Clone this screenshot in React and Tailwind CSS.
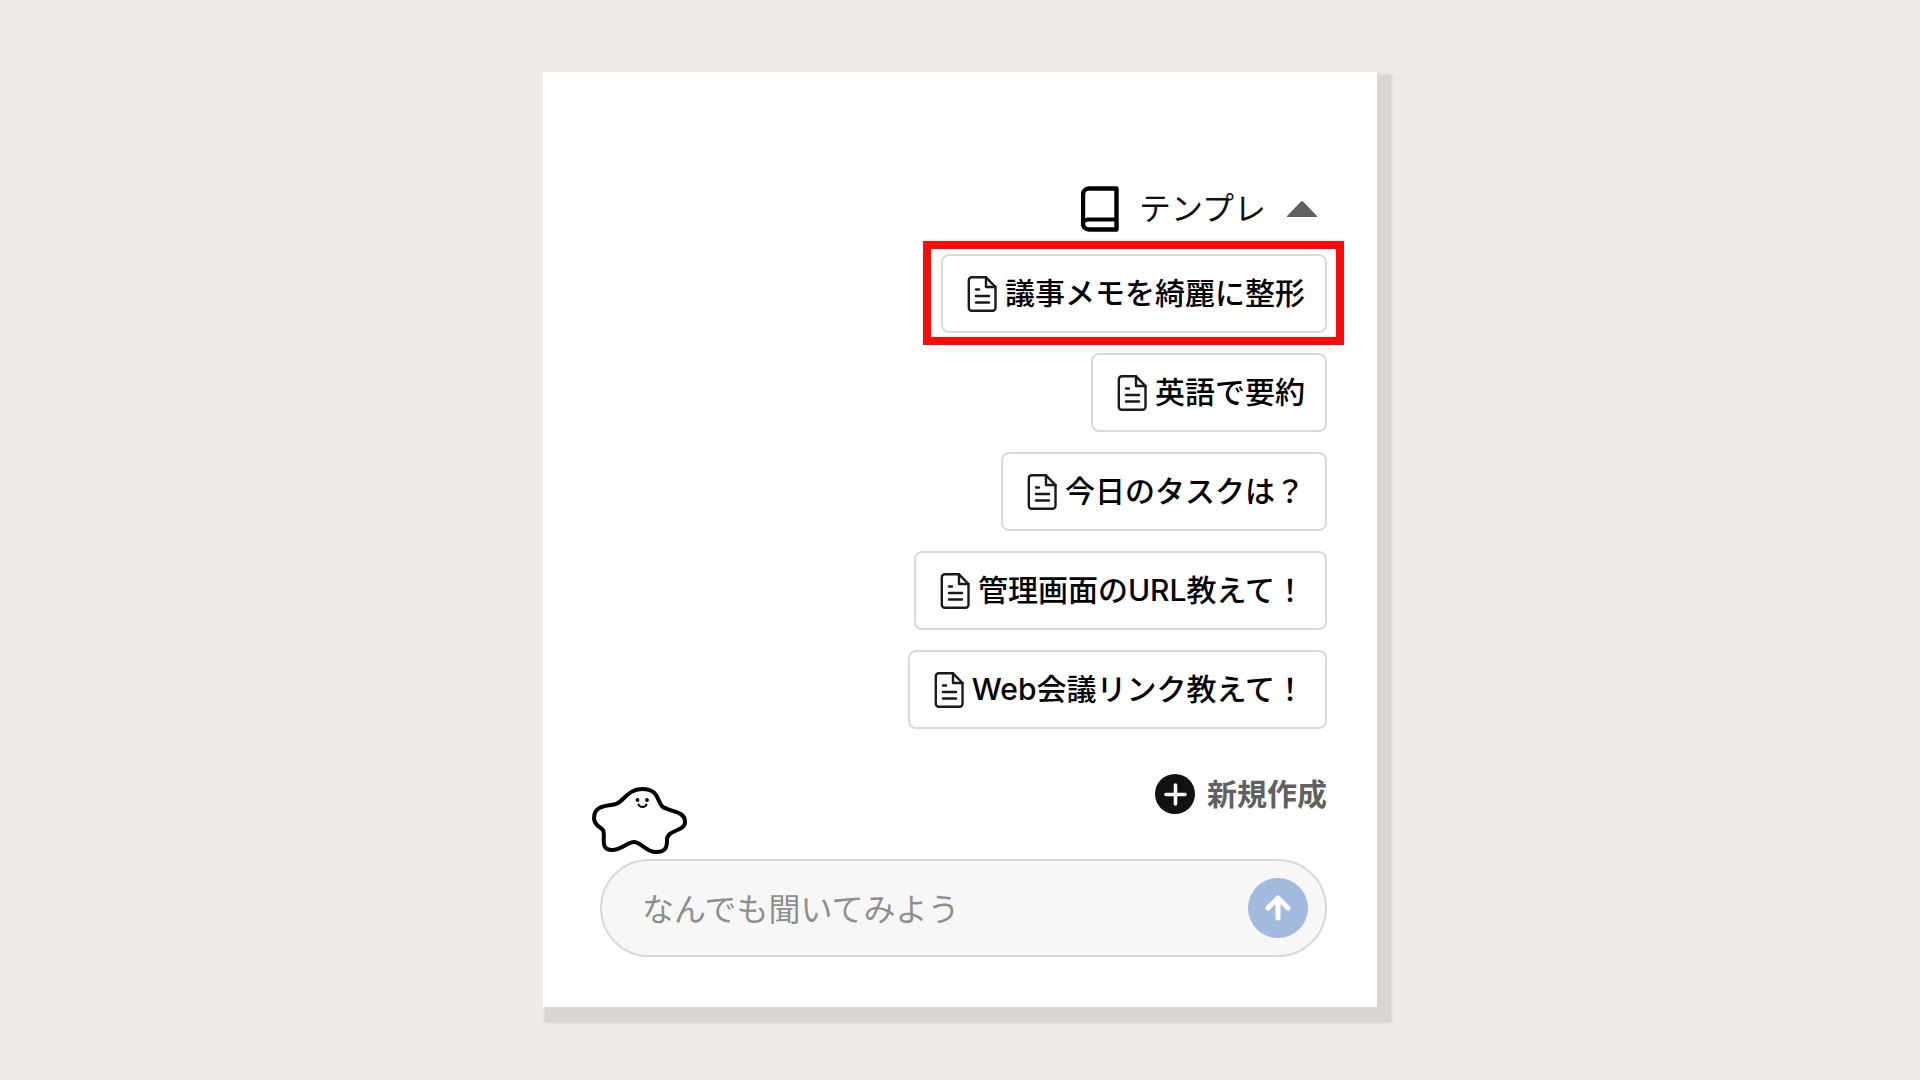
import React, { useState } from 'react';

const templates = [
    { id: 1, label: '議事メモを綺麗に整形', highlighted: true },
    { id: 2, label: '英語で要約' },
    { id: 3, label: '今日のタスクは？' },
    { id: 4, label: '管理画面のURL教えて！' },
    { id: 5, label: 'Web会議リンク教えて！' },
];

const BookIcon = () => (
    <svg width="38" height="46" viewBox="0 0 38 46" fill="none" stroke="#000" strokeWidth="4.4" strokeLinejoin="round" aria-hidden="true">
        <path d="M35.500 2.500H8a6 6 0 0 0-6 6v29a6 6 0 0 0 6 6h27.500V2.500Z" />
        <path d="M2 38a5 5 0 0 1 5-4.500h28.500" strokeWidth="3.8" />
    </svg>
);

const DocumentIcon = () => (
    <svg width="30" height="36" viewBox="0 0 30 36" fill="none" stroke="#1a1a1a" strokeWidth="2.4" strokeLinecap="round" strokeLinejoin="round" aria-hidden="true">
        <path d="M19 1.300H4.800a3 3 0 0 0-3 3v27.400a3 3 0 0 0 3 3h20.700a3 3 0 0 0 3-3V11L19 1.300Z" />
        <path d="M19 1.300V11h9.500" />
        <path d="M9 13.500h3M9 20h13M9 26.500h13" />
    </svg>
);

const Mascot = () => (
    <svg width="96" height="70" viewBox="0 0 96 70" fill="#fff" stroke="#000" strokeWidth="4" strokeLinejoin="round" aria-hidden="true">
        <path d="M24 18C32 15 36 3 50 3C68 3 65 17 71 21C79 26 93 25 93 36C93 46 75 43 75 54C75 61 74 66 64 66C54 66 49 56 42 56C35 56 30 64 20 64C7 64 14 50 11 44C9 41 2 40 2 32C2 19 15 20 24 18Z" />
        <circle cx="45.500" cy="14" r="1.900" fill="#000" stroke="none" />
        <circle cx="55" cy="14" r="1.900" fill="#000" stroke="none" />
        <path d="M46.500 18.500c1 3.200 7 3.200 8 0" fill="none" strokeWidth="2" strokeLinecap="round" />
    </svg>
);

const TemplateButton = ({ label, highlighted }) => (
    <div className="relative">
        <button
            type="button"
            className="flex h-[79px] items-center gap-2 rounded-lg border-2 border-[#d9d9d9] bg-white pl-6 pr-5 text-[30px] font-medium text-black"
        >
            <DocumentIcon />
            {label}
        </button>
        {highlighted && (
            <div className="pointer-events-none absolute -bottom-3 -left-[18px] -right-[17px] -top-[13px] border-8 border-[#ff0909]" />
        )}
    </div>
);

const App = () => {
    const [open, setOpen] = useState(true);
    const [message, setMessage] = useState('');

    const handleSubmit = (e) => {
        e.preventDefault();
        setMessage('');
    };

    return (
        <div
            lang="ja"
            className="flex min-h-screen items-center justify-center bg-[#efebe8] pb-px font-['Inter','Noto_Sans_CJK_JP',sans-serif]"
        >
            <main className="w-full max-w-[834px] bg-white pb-[50px] pl-[57px] pr-[50px] pt-[114px] shadow-[8px_9px_2px_7px_#d9d5d2]">
                <div className="flex flex-col items-end">
                    <button
                        type="button"
                        onClick={() => setOpen(!open)}
                        className="mb-[22px] flex h-[46px] items-center gap-5 pr-[9px] text-[32px] text-[#111]"
                    >
                        <BookIcon />
                        テンプレ
                        <svg width="32" height="18" viewBox="0 0 32 18" fill="#606060" aria-hidden="true">
                            <path d="M15 1.500 1.500 15.500Q0 17 2 17H30Q32 17 30.500 15.500L17 1.500Q16 .5 15 1.500Z" />
                        </svg>
                    </button>

                    {open && (
                        <div className="flex flex-col items-end gap-5">
                            {templates.map((t) => (
                                <TemplateButton key={t.id} label={t.label} highlighted={t.highlighted} />
                            ))}
                        </div>
                    )}
                </div>

                <div className="mt-[45px] flex items-start justify-between">
                    <div className="-ml-2 mb-[3px] mt-3">
                        <Mascot />
                    </div>
                    <button type="button" className="flex items-center gap-3 text-[30px] leading-10 font-bold text-[#606060]">
                        <svg width="40" height="40" viewBox="0 0 40 40" aria-hidden="true">
                            <circle cx="20" cy="20" r="20" fill="#111" />
                            <path d="M20.500 11v19M11 20.500h19" stroke="#fff" strokeWidth="3.600" strokeLinecap="round" />
                        </svg>
                        新規作成
                    </button>
                </div>

                <form
                    onSubmit={handleSubmit}
                    className="flex h-[98px] items-center rounded-full border-2 border-[#d9d9d9] bg-[#f7f7f7] pl-10 pr-[17px]"
                >
                    <input
                        type="text"
                        aria-label="なんでも聞いてみよう"
                        placeholder="なんでも聞いてみよう"
                        value={message}
                        onChange={(e) => setMessage(e.target.value)}
                        className="min-w-0 flex-1 bg-transparent pt-1 text-[32px] text-black outline-none placeholder:text-[#8f8f8f]"
                    />
                    <button
                        type="submit"
                        aria-label="送信"
                        className="flex size-[60px] items-center justify-center rounded-full bg-[#a3badf]"
                    >
                        <svg width="26" height="26" viewBox="0 0 26 26" fill="none" stroke="#fff" strokeWidth="5" strokeLinecap="round" strokeLinejoin="round" aria-hidden="true">
                            <path d="M13 23V3M3 13 13 3l10 10" />
                        </svg>
                    </button>
                </form>
            </main>
        </div>
    );
};

export default App;
